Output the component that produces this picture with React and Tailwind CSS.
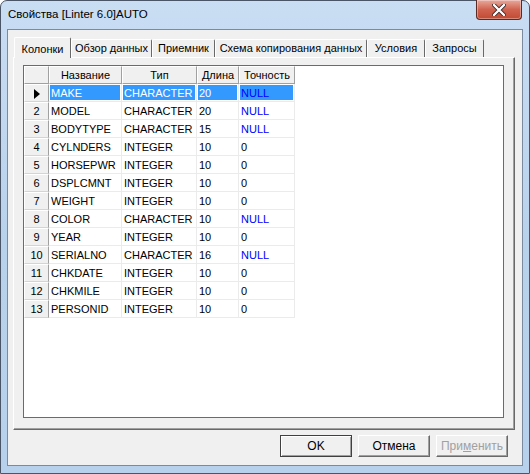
import React from 'react';

const rows = [
    ['MAKE', 'CHARACTER', '20', 'NULL'],
    ['MODEL', 'CHARACTER', '20', 'NULL'],
    ['BODYTYPE', 'CHARACTER', '15', 'NULL'],
    ['CYLNDERS', 'INTEGER', '10', '0'],
    ['HORSEPWR', 'INTEGER', '10', '0'],
    ['DSPLCMNT', 'INTEGER', '10', '0'],
    ['WEIGHT', 'INTEGER', '10', '0'],
    ['COLOR', 'CHARACTER', '10', 'NULL'],
    ['YEAR', 'INTEGER', '10', '0'],
    ['SERIALNO', 'CHARACTER', '16', 'NULL'],
    ['CHKDATE', 'INTEGER', '10', '0'],
    ['CHKMILE', 'INTEGER', '10', '0'],
    ['PERSONID', 'INTEGER', '10', '0'],
];

const tabs = [
    { label: 'Обзор данных', w: 'w-[81px]' },
    { label: 'Приемник', w: 'w-[63px]' },
    { label: 'Схема копирования данных', w: 'w-[152px]' },
    { label: 'Условия', w: 'w-[58px]' },
    { label: 'Запросы', w: 'w-[59px]' },
];

const cols = ['w-[73px]', 'w-[75px]', 'w-[42px]', 'w-[56px]'];
const heads = ['Название', 'Тип', 'Длина', 'Точность'];

const uiFont = { fontFamily: '"Liberation Sans", Arial, sans-serif' };

const Button = ({ children, primary, disabled }) => (
    <div
        className={
            'w-[72px] h-[22px] flex items-center justify-center text-[12px] bg-[#f0f0f0] border ' +
            (primary
                ? 'border-[#404040] shadow-[inset_1px_1px_0_#fff,inset_-1px_-1px_0_#a0a0a0]'
                : 'border-t-white border-l-white border-r-[#696969] border-b-[#696969] shadow-[inset_-1px_-1px_0_#a0a0a0]') +
            (disabled ? ' text-[#a0a0a0]' : ' text-black')
        }
    >
        {children}
    </div>
);

const App = () => {
    return (
        <div className="w-[530px] h-[474px] relative overflow-hidden" style={uiFont}>
            {/* window frame */}
            <div className="absolute inset-0 rounded-t-[7px] border border-[#4a5668] bg-gradient-to-b from-[#c9ddf3] via-[#b9d2ec] to-[#b7d0eb] flex flex-col">
                <div className="h-[28px] flex items-center pl-[7px] text-[11.5px] text-black">
                    Свойства [Linter 6.0]AUTO
                </div>

                {/* client */}
                <div className="ml-[6px] w-[516px] h-[437px] border border-[#7a8ba0] bg-[#f0f0f0] flex flex-col">
                    {/* tabs */}
                    <div className="h-[27px] flex items-end pl-[6px] text-[11px]">
                        <div className="w-[57px] h-[21px] -mb-px relative z-10 bg-[#f0f0f0] border-t border-l border-white border-r border-r-[#696969] rounded-t-[2px] flex items-start justify-center pt-[3px]">
                            Колонки
                        </div>
                        {tabs.map(t => (
                            <div
                                key={t.label}
                                className={t.w + ' h-[18px] border-t border-l border-white border-r border-r-[#696969] rounded-t-[2px] flex items-center justify-center whitespace-nowrap'}
                            >
                                {t.label}
                            </div>
                        ))}
                    </div>

                    {/* panel */}
                    <div className="ml-[5px] w-[502px] h-[373px] border-t border-l border-white border-r border-b border-r-[#696969] border-b-[#696969] shadow-[inset_-1px_-1px_0_#a0a0a0] pl-[9px] pt-[7px]">
                        <div className="w-[481px] h-[353px] border border-[#6b6b6b] bg-white text-[11px]">
                            {/* header */}
                            <div className="flex h-[18px]">
                                <div className="w-[25px] h-[18px] bg-[#f0f0f0] border-t border-l border-white border-r border-b border-r-[#a0a0a0] border-b-[#a0a0a0]" />
                                {heads.map((h, i) => (
                                    <div
                                        key={h}
                                        className={cols[i] + ' h-[18px] bg-[#f0f0f0] border-t border-l border-white border-r border-b border-r-[#a0a0a0] border-b-[#a0a0a0] flex items-center justify-center'}
                                    >
                                        {h}
                                    </div>
                                ))}
                            </div>
                            {rows.map((r, ri) => (
                                <div key={r[0]} className="flex h-[18px]">
                                    <div className="w-[25px] h-[18px] bg-[#f0f0f0] border-t border-l border-white border-r border-b border-r-[#a0a0a0] border-b-[#d4d4d4] flex items-center justify-center pt-[1px]">
                                        {ri === 0 ? (
                                            <svg width="6" height="10" viewBox="0 0 6 10">
                                                <path d="M0 0 L6 5 L0 10 Z" fill="#000" />
                                            </svg>
                                        ) : (
                                            ri + 1
                                        )}
                                    </div>
                                    {r.map((c, ci) => {
                                        const isNull = c === 'NULL';
                                        return (
                                            <div
                                                key={ci}
                                                className={cols[ci] + ' h-[18px] border-r border-b border-[#ebebeb] p-[1px]'}
                                            >
                                                <div
                                                    className={
                                                        'h-full flex items-center pl-[1px] pt-[1px] whitespace-nowrap ' +
                                                        (ri === 0 ? 'bg-[#3399ff] ' : '') +
                                                        (isNull ? 'text-[#0000ff]' : ri === 0 ? 'text-white' : 'text-black')
                                                    }
                                                >
                                                    {c}
                                                </div>
                                            </div>
                                        );
                                    })}
                                </div>
                            ))}
                        </div>
                    </div>

                    {/* buttons */}
                    <div className="flex justify-end gap-[6px] pr-[14px] pt-[5px]">
                        <Button primary>OK</Button>
                        <Button>Отмена</Button>
                        <Button disabled>
                            <span>
                                При<span className="underline">м</span>енить
                            </span>
                        </Button>
                    </div>
                </div>
            </div>

            {/* close button */}
            <div className="absolute top-0 right-[8px] w-[46px] h-[20px] rounded-b-[4px] border border-t-0 border-[#5a2a25] bg-gradient-to-b from-[#e8a89c] via-[#d0634f] to-[#c24a32] flex items-center justify-center shadow-[inset_0_0_0_1px_rgba(255,255,255,0.35)]">
                <svg width="14" height="12" viewBox="0 0 14 12">
                    <path d="M2 1 L12 11 M12 1 L2 11" stroke="#3a2a2a" strokeWidth="4" strokeLinecap="round" />
                    <path d="M2 1 L12 11 M12 1 L2 11" stroke="#fff" strokeWidth="2.4" strokeLinecap="round" />
                </svg>
            </div>
        </div>
    );
};

export default App;
